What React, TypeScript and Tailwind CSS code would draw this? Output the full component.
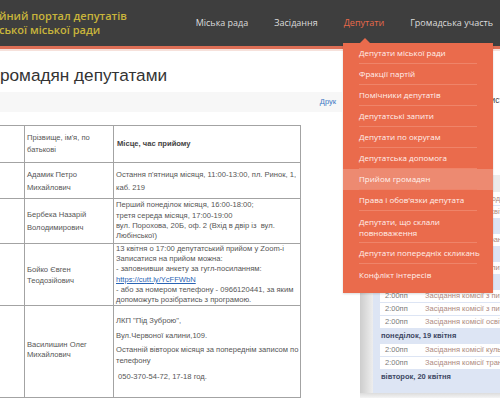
import React from "react";

const menuItems: string[][] = [
  ["Депутати міської ради"],
  ["Фракції партій"],
  ["Помічники депутатів"],
  ["Депутатські запити"],
  ["Депутати по округам"],
  ["Депутатська допомога"],
  ["Прийом громадян"],
  ["Права і обов'язки депутата"],
  ["Депутати, що склали", "повноваження"],
  ["Депутати попередніх скликань"],
  ["Конфлікт інтересів"],
];

type CalRow = { d?: string; t?: string };
const calRows: CalRow[] = [
  { t: "Засідання комісії бюджету" },
  { t: "Засідання комісії освіти" },
  { d: "п'ятниця, 16 квітня" },
  { t: "Засідання комісії транспорту" },
  { d: "субота, 17 квітня" },
  { t: "Засідання комісії з питань" },
  { d: "неділя, 18 квітня" },
  { t: "Засідання комісії з питань" },
  { t: "Засідання комісії з питань" },
  { t: "Засідання комісії освіти" },
  { d: "понеділок, 19 квітня" },
  { t: "Засідання комісії культури" },
  { t: "Засідання комісії транспорту" },
  { d: "вівторок, 20 квітня" },
];

export default function App() {
  return (
    <div className="relative w-[500px] h-[400px] overflow-hidden bg-white font-['Liberation_Sans',Arial,sans-serif]">
      <header className="h-[46px] bg-[#3e3e3e] flex items-center justify-between font-['Open_Sans',sans-serif]">
        <div className="ml-[-1px] text-[11px] leading-[14px] font-semibold text-[#c9b53b] pb-[1px] whitespace-nowrap">
          <div>йний портал депутатів</div>
          <div>ської міської ради</div>
        </div>
        <nav className="flex gap-[26px] pr-[7px] text-[9px] text-[#dcdcdc] whitespace-nowrap">
          <span>Міська рада</span>
          <span>Засідання</span>
          <span className="text-[#e8694a]">Депутати</span>
          <span>Громадська участь</span>
        </nav>
      </header>
      <div className="h-[3px] bg-[#dd6e55]" />
      <div className="h-[2px] bg-[#f6e1db]" />

      <div className="flex">
        <main className="w-[342px] shrink-0">
          <h1 className="mt-[11px] text-[17.2px] leading-[26px] text-[#333] whitespace-nowrap">
            ромадян депутатами
          </h1>
          <div className="mt-[4px] h-[20px] bg-[#f7f7f7] flex items-center justify-end pr-[6px]">
            <a className="text-[7.5px] text-[#3b78c4]">Друк</a>
          </div>
          <table className="mt-[13px] ml-[-10px] w-[310px] table-fixed border-collapse text-[7.6px] text-[#555]">
            <colgroup>
              <col className="w-[34px]" />
              <col className="w-[89px]" />
              <col className="w-[187px]" />
            </colgroup>
            <tbody>
              <tr className="h-[37px]">
                <td className="border border-[#a3a3a3]" />
                <td className="border border-[#a3a3a3] px-[2px] leading-[12px]">
                  Прізвище, ім'я, по
                  <br />
                  батькові
                </td>
                <td className="border border-[#a3a3a3] px-[3px] font-bold text-[#444]">Місце, час прийому</td>
              </tr>
              <tr className="h-[36px]">
                <td className="border border-[#a3a3a3]" />
                <td className="border border-[#a3a3a3] px-[2px] leading-[13px]">
                  Адамик Петро
                  <br />
                  Михайлович
                </td>
                <td className="border border-[#a3a3a3] px-[2px] leading-[13px] whitespace-nowrap">
                  Остання п'ятниця місяця, 11:00-13:00, пл. Ринок, 1,
                  <br />
                  каб. 219
                </td>
              </tr>
              <tr className="h-[45px]">
                <td className="border border-[#a3a3a3]" />
                <td className="border border-[#a3a3a3] px-[2px] leading-[13px]">
                  Бербека Назарій
                  <br />
                  Володимирович
                </td>
                <td className="border border-[#a3a3a3] px-[2px] leading-[10.3px] whitespace-nowrap">
                  Перший понеділок місяця, 16:00-18:00;
                  <br />
                  третя середа місяця, 17:00-19:00
                  <br />
                  вул. Порохова, 20Б, оф. 2 (Вхід в двір із&nbsp; вул.
                  <br />
                  Любінської)
                </td>
              </tr>
              <tr className="h-[62px]">
                <td className="border border-[#a3a3a3]" />
                <td className="border border-[#a3a3a3] px-[2px] leading-[11px]">
                  Бойко Євген
                  <br />
                  Теодозійович
                </td>
                <td className="border border-[#a3a3a3] px-[2px] leading-[10.2px] whitespace-nowrap">
                  13 квітня о 17:00 депутатський прийом у Zoom-і
                  <br />
                  Записатися на прийом можна:
                  <br />
                  - заповнивши анкету за гугл-посиланням:
                  <br />
                  <a className="text-[#2a64b4] underline">https://cutt.ly/YcFFWbN</a>
                  <br />
                  - або за номером телефону - 0966120441, за яким
                  <br />
                  допоможуть розібратись з програмою.
                </td>
              </tr>
              <tr className="h-[92px]">
                <td className="border border-[#a3a3a3]" />
                <td className="border border-[#a3a3a3] px-[2px] leading-[10px] pb-[4px]">
                  Василишин Олег
                  <br />
                  Михайлович
                </td>
                <td className="border border-[#a3a3a3] px-[2px] leading-[11px] whitespace-nowrap pb-[6px]">
                  <p className="mb-[4px]">ЛКП "Під Зуброю",</p>
                  <p className="mb-[3px]">Вул.Червоної калини,109.</p>
                  <p className="mb-[5px]">
                    Останній вівторок місяця за попереднім записом по
                    <br />
                    телефону
                  </p>
                  <p>&nbsp;050-370-54-72, 17-18 год.</p>
                </td>
              </tr>
            </tbody>
          </table>
        </main>

        <aside className="ml-[18px] w-[200px] shrink-0">
          <div className="mt-[44px] text-[8.5px] leading-[10px] text-[#444] whitespace-nowrap">
            <p>Засідання постійних комісій особисто</p>
            <p>відбудеться у квітні 13.2021</p>
            <p className="mt-[15px]">Прийом громадян депутатами й</p>
          </div>
          <div className="mt-[35px] flex flex-col">
            <div className="flex">
              <div className="w-[13px] shrink-0 bg-gradient-to-r from-[#cdcdcd] to-[#eeeeee]" />
              <div className="flex-1">
                <div className="h-[17px] bg-[#ececec]" />
                <div className="bg-[#dde5f4] px-[7px] pb-[9px] text-[7.5px] whitespace-nowrap">
                  {calRows.map((r, i) =>
                    r.d ? (
                      <div key={i} className="h-[14px] flex items-center pl-[1px] font-bold text-[#3c4762]">
                        {r.d}
                      </div>
                    ) : (
                      <div key={i} className="h-[12px] my-[1px] bg-white flex items-center">
                        <span className="w-[45px] shrink-0 pl-[5px] text-[#7a7a7a]">2:00пп</span>
                        <span className="text-[#ad8a7e]">{r.t}</span>
                      </div>
                    )
                  )}
                </div>
              </div>
            </div>
            <div className="h-[5px] bg-gradient-to-b from-[#dcdcdc] to-[#f4f4f4]" />
          </div>
        </aside>
      </div>

      <div className="absolute left-[343px] top-[43px] w-[150px] bg-[#ea6b4c] pb-[8px] font-['Open_Sans',sans-serif] text-[8px] font-medium text-[#fff1ec] shadow-[0_1px_2px_rgba(0,0,0,0.15)]">
        <div className="absolute -top-[5px] left-[17px] w-0 h-0 border-l-[5px] border-r-[5px] border-b-[5px] border-l-transparent border-r-transparent border-b-[#ea6b4c]" />
        {menuItems.map((it, i) => (
          <div key={i} className={i === 6 ? "px-[16px] bg-[#ed8a71]" : "px-[16px]"}>
            <div
              className={
                (it.length > 1 ? "h-[32px] leading-[11px] " : "h-[21px] ") +
                (i === menuItems.length - 1 ? "" : "border-b border-[#ef8469] ") +
                "flex flex-col justify-center whitespace-nowrap"
              }
            >
              {it.map((l, j) => (
                <span key={j}>{l}</span>
              ))}
            </div>
          </div>
        ))}
      </div>
    </div>
  );
}
